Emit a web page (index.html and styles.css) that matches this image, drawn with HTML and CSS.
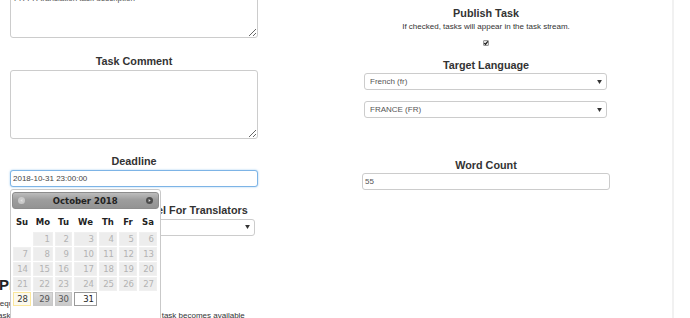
FILE: index.html
```html
<!DOCTYPE html>
<html lang="en">
<head>
<meta charset="utf-8">
<title>Create Task</title>
<link rel="stylesheet" href="styles.css">
</head>
<body>
<div class="page">
  <div class="columns">
    <div class="col">
      <textarea class="field area area-first">FR-FR translation task description</textarea>
      <h3 class="label">Task Comment</h3>
      <textarea class="field area area-second"></textarea>
      <h3 class="label label-tight">Deadline</h3>
      <div class="deadline">
        <input class="field input focused" type="text" value="2018-10-31 23:00:00">
        <div class="datepicker">
          <div class="dp-header">
            <span class="dp-nav">
              <svg viewBox="0 0 8 8" width="7" height="7"><circle cx="4" cy="4" r="4" fill="#c9c9c9"/><path d="M5 2.3 L2.6 4 L5 5.7 Z" fill="#e2e2e2"/></svg>
            </span>
            <span class="dp-title">October 2018</span>
            <span class="dp-nav">
              <svg viewBox="0 0 8 8" width="7" height="7"><circle cx="4" cy="4" r="4" fill="#4d4d4d"/><path d="M3 2.3 L5.4 4 L3 5.7 Z" fill="#d8d8d8"/></svg>
            </span>
          </div>
          <div class="dp-row dp-dow">
            <span>Su</span><span>Mo</span><span>Tu</span><span>We</span><span>Th</span><span>Fr</span><span>Sa</span>
          </div>
          <div class="dp-row dp-days">
            <span class="day empty"></span>
            <span class="day off">1</span><span class="day off">2</span><span class="day off">3</span><span class="day off">4</span><span class="day off">5</span><span class="day off">6</span>
            <span class="day off">7</span><span class="day off">8</span><span class="day off">9</span><span class="day off">10</span><span class="day off">11</span><span class="day off">12</span><span class="day off">13</span>
            <span class="day off">14</span><span class="day off">15</span><span class="day off">16</span><span class="day off">17</span><span class="day off">18</span><span class="day off">19</span><span class="day off">20</span>
            <span class="day off">21</span><span class="day off">22</span><span class="day off">23</span><span class="day off">24</span><span class="day off">25</span><span class="day off">26</span><span class="day off">27</span>
            <span class="day today">28</span><span class="day open">29</span><span class="day open">30</span><span class="day active">31</span>
          </div>
        </div>
      </div>
      <h3 class="label">Required Qualification Level For Translators</h3>
      <div class="select select-empty">
        <span class="select-text"></span>
        <svg class="caret" viewBox="0 0 6 5" width="5" height="4"><path d="M0 0 H6 L3 5 Z" fill="#333"/></svg>
      </div>
    </div>

    <div class="col col-right">
      <h3 class="label">Publish Task</h3>
      <p class="help">If checked, tasks will appear in the task stream.</p>
      <div class="check-row">
        <span class="checkbox">
          <svg viewBox="0 0 6 6" width="6" height="6"><path d="M1.3 3.1 L2.5 4.4 L4.8 1.4" fill="none" stroke="#111" stroke-width="1.1"/></svg>
        </span>
      </div>
      <h3 class="label label-lang">Target Language</h3>
      <div class="select">
        <span class="select-text">French (fr)</span>
        <svg class="caret" viewBox="0 0 6 5" width="5" height="4"><path d="M0 0 H6 L3 5 Z" fill="#333"/></svg>
      </div>
      <div class="select select-second">
        <span class="select-text">FRANCE (FR)</span>
        <svg class="caret" viewBox="0 0 6 5" width="5" height="4"><path d="M0 0 H6 L3 5 Z" fill="#333"/></svg>
      </div>
      <h3 class="label label-words">Word Count</h3>
      <input class="field input" type="text" value="55">
    </div>
  </div>

  <section class="bottom">
    <h2 class="section-title">Prerequisites</h2>
    <p class="note">Required tasks for this one:</p>
    <p class="note note-last">Tasks listed here must be done before the final task becomes available</p>
  </section>
</div>
</body>
</html>
```

FILE: styles.css
```css
* { box-sizing: border-box; }

html, body {
  margin: 0;
  padding: 0;
  background: #fff;
}

body {
  font-family: "Liberation Sans", Arial, sans-serif;
  color: #333;
}

.page {
  width: 674px;
  height: 318px;
  border-right: 2px solid #f1f1f1;
  overflow: hidden;
}

.columns {
  display: grid;
  grid-template-columns: 248px 248px;
  column-gap: 104px;
  padding-left: 10px;
  margin-top: -12px;
}

.col {
  display: flex;
  flex-direction: column;
}

.col-right {
  padding-top: 18.5px;
}

.label {
  margin: 17px 0 3px;
  font-size: 10.8px;
  line-height: 12px;
  font-weight: bold;
  text-align: center;
  color: #333;
}

.label-tight { margin-top: 16px; }

.col-right .label { margin-top: 0; margin-bottom: 2px; }
.col-right .label-lang { margin-top: 13.5px; }
.col-right .label-words { margin-top: 41px; }

.field {
  display: block;
  width: 248px;
  border: 1px solid #ccc;
  border-radius: 3px;
  background: #fff;
  font-family: "Liberation Sans", Arial, sans-serif;
  font-size: 8px;
  color: #555;
  margin: 0;
  outline: none;
}

.area {
  padding: 2px 3px;
  line-height: 11px;
  resize: vertical;
}

.area-first { height: 50px; padding-top: 3.5px; }
.area-second { height: 69px; }

.input {
  height: 17px;
  padding: 0 2px;
}

.focused {
  border-color: #7db4e6;
  box-shadow: 0 0 2px rgba(102, 175, 233, 0.7);
  color: #444;
}

.deadline {
  position: relative;
}

.datepicker {
  position: absolute;
  left: 0;
  top: calc(100% + 2px);
  z-index: 5;
  width: 151px;
  height: 140px;
  padding: 2px 1px;
  background: #fff;
  border: 1px solid #c9c9c9;
  border-radius: 3px;
  font-family: "DejaVu Sans", Verdana, sans-serif;
  font-size: 8.5px;
}

.dp-header {
  display: flex;
  align-items: center;
  justify-content: space-between;
  height: 17px;
  padding: 0 5px 0 4.5px;
  border: 1px solid #8c8c8c;
  border-radius: 3px;
  background: linear-gradient(#bdbdbd, #9d9d9d 45%, #939393);
}

.dp-nav {
  display: flex;
  width: 7px;
  height: 7px;
}

.dp-title {
  font-weight: bold;
  color: #222;
}

.dp-row {
  display: grid;
  grid-template-columns: 18px 20px 17px 23px 18px 18px 18px;
  column-gap: 2px;
  margin-left: 1px;
}

.dp-dow {
  height: 18px;
  margin-top: 4px;
  align-items: center;
  text-align: center;
  font-weight: bold;
  color: #222;
}

.dp-days {
  grid-auto-rows: 14px;
  row-gap: 1px;
  margin-top: 1px;
}

.day {
  display: flex;
  align-items: center;
  justify-content: flex-end;
  padding-right: 2px;
  color: #555;
  border: 1px solid transparent;
}

.day.empty { background: transparent; }

.day.off {
  background: #ededed;
  border-color: #f0f0f0;
  color: #b3b3b3;
}

.day.today {
  background: #fbf9ee;
  border-color: #fbe79c;
  color: #363636;
}

.day.open {
  background: linear-gradient(#d9d9d9, #c9c9c9);
  border-color: #c8c8c8;
  color: #555;
}

.day.active {
  background: #fff;
  border-color: #9a9a9a;
  color: #212121;
}

.help {
  margin: 0;
  font-size: 8px;
  line-height: 11px;
  text-align: center;
  color: #333;
}

.check-row {
  display: flex;
  justify-content: center;
  margin-top: 8px;
}

.checkbox {
  display: flex;
  width: 6px;
  height: 6px;
  border: 1px solid #9a9a9a;
  border-radius: 1px;
  background: #e2e2e2;
}

.checkbox svg {
  margin: -1px;
}

.select {
  display: flex;
  align-items: center;
  justify-content: space-between;
  height: 17px;
  margin: 0 3px 0 2px;
  padding: 0 4px 0 5px;
  border: 1px solid #ccc;
  border-radius: 3px;
  background: #fff;
  font-size: 8px;
  color: #555;
}

.select-empty { height: 16.5px; }

.select-second { margin-top: 11px; }

.caret { flex: none; }

.bottom {
  margin-top: 40.6px;
}

.section-title {
  margin: 0 0 0 -1px;
  font-size: 15px;
  line-height: 17px;
  font-weight: bold;
  color: #222;
}

.note {
  margin: 5px 0 0 -6px;
  font-size: 8px;
  line-height: 11px;
  color: #333;
  white-space: nowrap;
}

.note-last { margin-top: 1px; }
```
